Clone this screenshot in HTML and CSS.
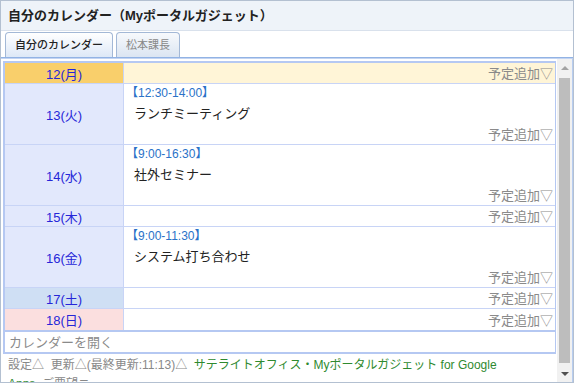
FILE: index.html
```html
<!DOCTYPE html>
<html lang="ja">
<head>
  <meta charset="UTF-8">
  <meta name="viewport" content="width=device-width, initial-scale=1.0">
  <title>自分のカレンダー</title>
  <link rel="stylesheet" href="styles.css">
</head>
<body>

  <div class="gadget">
    <div class="gadget-title">自分のカレンダー（Myポータルガジェット）</div>

    <div class="tabs">
      <div class="tab active">自分のカレンダー</div>
      <div class="tab">松本課長</div>
    </div>

    <div class="gadget-body">
      <div class="scroll">
        <div class="cal-box">
          <div class="day today">
            <div class="date">12(月)</div>
            <div class="events"><a class="add">予定追加▽</a></div>
          </div>
          <div class="day tall">
            <div class="date">13(火)</div>
            <div class="events">
              <div class="time">【12:30-14:00】</div>
              <div class="subject">ランチミーティング</div>
              <a class="add">予定追加▽</a>
            </div>
          </div>
          <div class="day tall">
            <div class="date">14(水)</div>
            <div class="events">
              <div class="time">【9:00-16:30】</div>
              <div class="subject">社外セミナー</div>
              <a class="add">予定追加▽</a>
            </div>
          </div>
          <div class="day">
            <div class="date">15(木)</div>
            <div class="events"><a class="add">予定追加▽</a></div>
          </div>
          <div class="day tall">
            <div class="date">16(金)</div>
            <div class="events">
              <div class="time">【9:00-11:30】</div>
              <div class="subject">システム打ち合わせ</div>
              <a class="add">予定追加▽</a>
            </div>
          </div>
          <div class="day sat">
            <div class="date">17(土)</div>
            <div class="events"><a class="add">予定追加▽</a></div>
          </div>
          <div class="day sun">
            <div class="date">18(日)</div>
            <div class="events"><a class="add">予定追加▽</a></div>
          </div>
          <div class="open-cal">カレンダーを開く</div>
        </div>

        <div class="footer">
          <span>設定△</span>&nbsp;
          <span>更新△(最終更新:11:13)△</span>&nbsp;
          <a class="credit">サテライトオフィス・Myポータルガジェット for Google Apps</a>&nbsp;
          <span>ご要望ニ</span>
        </div>
      </div>

      <div class="scrollbar">
        <div class="sb-btn"><span class="arrow-up"></span></div>
        <div class="sb-track"><div class="sb-thumb"></div></div>
        <div class="sb-btn"><span class="arrow-down"></span></div>
      </div>
    </div>
  </div>

</body>
</html>
```

FILE: styles.css
```css
* {
  box-sizing: border-box;
}

body {
  margin: 0;
  padding: 0;
  background: #fff;
  font-family: "Liberation Sans", "Noto Sans CJK JP", sans-serif;
}

.gadget {
  width: 574px;
  height: 383px;
  border: 1px solid #b3c0d1;
  display: flex;
  flex-direction: column;
}

.gadget-title {
  height: 30px;
  padding-left: 7px;
  line-height: 29px;
  font-size: 13px;
  font-weight: bold;
  color: #222;
  background: #eef3f9;
  border-bottom: 1px solid #d9e1ec;
}

/* tabs */
.tabs {
  display: flex;
  gap: 3px;
  height: 27px;
  padding: 1px 0 0 4px;
  border-bottom: 1px solid #92b3e4;
}

.tab {
  height: 25px;
  padding: 0 9px;
  line-height: 24px;
  font-size: 11px;
  color: #888;
  border: 1px solid #a3b8d6;
  border-bottom: none;
  border-radius: 4px 4px 0 0;
  background: linear-gradient(#f7f9fc, #dbe5f2);
}

.tab.active {
  color: #222;
  font-weight: 500;
  background: linear-gradient(#ffffff, #dde8f7);
}

/* body + scroll */
.gadget-body {
  flex: 1;
  display: flex;
  min-height: 0;
  border-top: 1px solid #c3d4f2;
  border-right: 1px solid #b8cdf0;
}

.scroll {
  flex: 1;
  overflow: hidden;
  padding: 2px 0 0 2px;
}

.cal-box {
  border: 2px solid #b5c8f2;
  border-right-width: 1px;
}

.day {
  display: flex;
  height: 21px;
  border-bottom: 1px solid #c8d4f6;
}

.day.tall {
  height: 61px;
}

.day.sun {
  border-bottom: none;
}

.date {
  width: 119px;
  display: flex;
  align-items: center;
  justify-content: center;
  font-size: 13px;
  color: #2626d8;
  background: #e2e8fc;
  border-right: 1px solid #c8d4f6;
}

.today .date {
  background: #f9cf6b;
}

.today .events {
  background: #fff5d7;
}

.sat .date {
  background: #cfdff4;
}

.sun .date {
  background: #fbdfdf;
}

.events {
  flex: 1;
  display: flex;
  flex-direction: column;
  padding: 1px 2px 0 2px;
  background: #fff;
}

.time {
  font-size: 12px;
  line-height: 16px;
  color: #2a72c8;
}

.subject {
  margin-top: 3px;
  padding-left: 8px;
  font-size: 13px;
  line-height: 20px;
  color: #222;
}

.add {
  margin-top: auto;
  align-self: flex-end;
  font-size: 13px;
  line-height: 19px;
  color: #8a8a8a;
}

.open-cal {
  height: 22px;
  padding-left: 4px;
  line-height: 21px;
  font-size: 13px;
  color: #8a8a8a;
  border-top: 2px solid #b5c8f2;
}

.footer {
  padding: 2px 40px 0 5px;
  font-size: 12px;
  line-height: 19px;
  color: #888;
}

.credit {
  color: #2f8a2f;
}

/* scrollbar */
.scrollbar {
  width: 16px;
  display: flex;
  flex-direction: column;
  background: #f1f1f1;
  border-left: 1px solid #fff;
}

.sb-btn {
  height: 17px;
  display: flex;
  align-items: center;
  justify-content: center;
}

.arrow-up {
  border-left: 4px solid transparent;
  border-right: 4px solid transparent;
  border-bottom: 4px solid #a3a3a3;
}

.arrow-down {
  border-left: 4px solid transparent;
  border-right: 4px solid transparent;
  border-top: 4px solid #505050;
}

.sb-track {
  flex: 1;
  padding: 2px 2px 2px;
}

.sb-thumb {
  height: 100%;
  background: #bdbdbd;
}
```
